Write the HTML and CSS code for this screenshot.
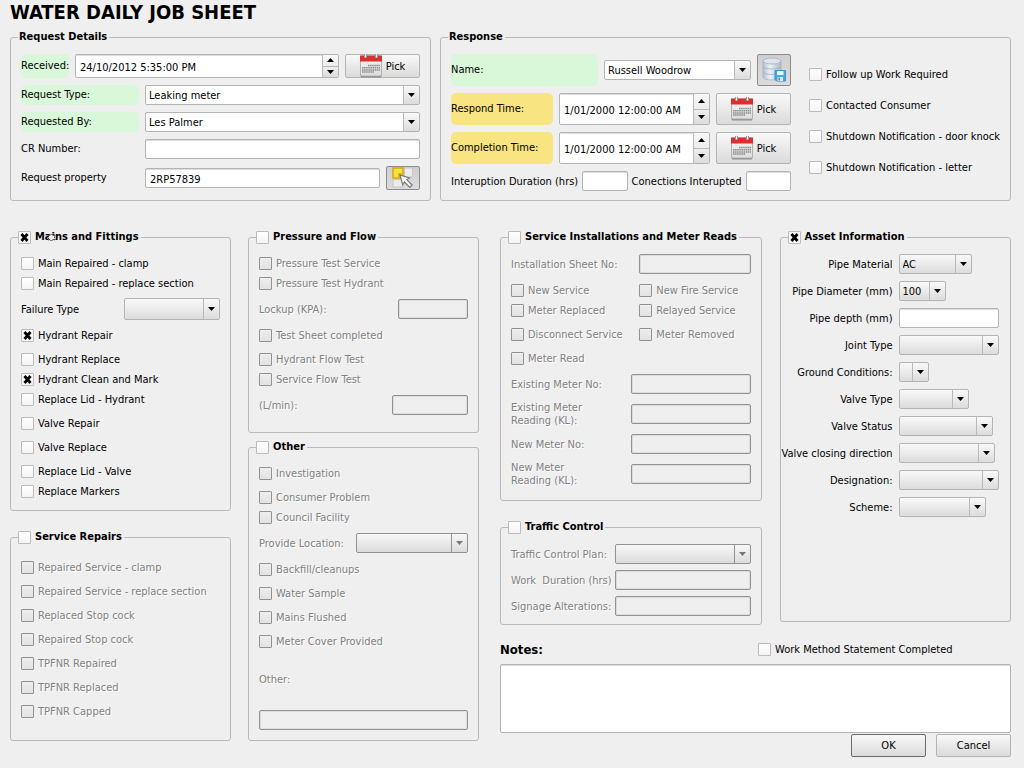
FILE: index.html
```html
<!DOCTYPE html>
<html lang="en">
<head>
<meta charset="utf-8">
<title>Water Daily Job Sheet</title>
<link rel="stylesheet" href="styles.css">
</head>
<body>
<svg class="defs" aria-hidden="true">
  <defs>
    <linearGradient id="page" x1="0" y1="0" x2="0" y2="1"><stop offset="0" stop-color="#f4f4f4"/><stop offset="1" stop-color="#dcdcdc"/></linearGradient>
    <linearGradient id="disk" x1="0" y1="0" x2="1" y2="0"><stop offset="0" stop-color="#b4c0cd"/><stop offset=".4" stop-color="#eef2f6"/><stop offset="1" stop-color="#a9b6c4"/></linearGradient>
  </defs>
  <symbol id="calendar" viewBox="0 0 22 24">
    <rect x=".5" y="3" width="21" height="20.500" rx="1.500" fill="#8e8e8e"/>
    <rect x=".5" y="2" width="21" height="20" rx="1.500" fill="url(#page)" stroke="#a9a9a9" stroke-width=".8"/>
    <rect x="0" y="1.500" width="22" height="6" fill="#d92f2f"/>
    <path d="M5.500 0v4M16.500 0v4" stroke="#8d8d8d" stroke-width="3"/>
    <path d="M5.500 0v3.500M16.500 0v3.500" stroke="#ececec" stroke-width="1.200"/>
    <path d="M8 11.500h12" stroke="#8a8a8a" stroke-width="1.500" stroke-dasharray="1.500 .6"/>
    <path d="M2 13.700h18M2 15.900h18" stroke="#8a8a8a" stroke-width="1.500" stroke-dasharray="1.500 .6"/>
    <path d="M2 18.100h12" stroke="#8a8a8a" stroke-width="1.500" stroke-dasharray="1.500 .6"/>
  </symbol>
</svg>
<form class="sheet">
  <h1 class="title">WATER DAILY JOB SHEET</h1>

  <div class="top">
    <fieldset class="group">
      <legend>Request Details</legend>
      <div class="body stack">
        <div class="row">
          <label class="tag green short" for="received">Received:</label>
          <span class="spin"><input id="received" type="text" value="24/10/2012 5:35:00 PM"><span class="steps"><button type="button" class="up" aria-label="Increase"></button><button type="button" class="down" aria-label="Decrease"></button></span></span>
          <button type="button" class="btn pick"><svg class="cal"><use href="#calendar"/></svg>Pick</button>
        </div>
        <div class="row">
          <label class="tag green" for="rtype">Request Type:</label>
          <select id="rtype" class="combo white fill"><option>Leaking meter</option></select>
        </div>
        <div class="row">
          <label class="tag green" for="rby">Requested By:</label>
          <select id="rby" class="combo white fill"><option>Les Palmer</option></select>
        </div>
        <div class="row">
          <label class="tag" for="cr">CR Number:</label>
          <input id="cr" class="text fill" type="text">
        </div>
        <div class="row">
          <label class="tag" for="prop">Request property</label>
          <input id="prop" class="text fill" type="text" value="2RP57839">
          <button type="button" class="btn tool" aria-label="Select property">
            <svg width="22" height="22" viewBox="0 0 22 22"><rect x="12.500" y="1" width="8" height="9" fill="#ececec" stroke="#c6c6c6"/><rect x="1" y="12.500" width="10" height="7.500" fill="#ececec" stroke="#c6c6c6"/><rect x="1" y="1" width="10" height="10" fill="#fbe13c" stroke="#d1ab14" stroke-width="1.500"/><rect x="6" y="6" width="5" height="5" fill="#d9b521"/><path d="M8 8l9.500 3-2.700 1.600 5.400 5.400-2.400 2.400-5.400-5.400-1.700 2.800z" fill="#f2f2f2" stroke="#777" stroke-width="1.100"/></svg>
          </button>
        </div>
      </div>
    </fieldset>

    <fieldset class="group">
      <legend>Response</legend>
      <div class="body split">
        <div class="stack">
          <div class="row tall">
            <label class="tag green wide" for="name">Name:</label>
            <select id="name" class="combo white fill"><option>Russell Woodrow</option></select>
            <button type="button" class="btn tool" aria-label="Save default name">
              <svg width="24" height="26" viewBox="0 0 24 26"><g stroke="#a5b2c0" stroke-width=".8" fill="url(#disk)"><path d="M1 15v5c0 4 18 4 18 0v-5z"/><path d="M1 9.500v5c0 4 18 4 18 0v-5z"/><path d="M1 4v5c0 4 18 4 18 0V4z"/><ellipse cx="10" cy="4" rx="9" ry="3" fill="#dce4ec"/></g><path d="M13 13.500h10.500v10.500h-9L13 22.500z" fill="#4ba9dc" stroke="#3a92c6"/><rect x="15" y="14" width="6.500" height="4" fill="#eaf6fc"/><rect x="15.500" y="20" width="5.500" height="4" fill="#d5eaf5"/><rect x="16.500" y="20.500" width="1.500" height="3" fill="#3a92c6"/></svg>
            </button>
          </div>
          <div class="row tall">
            <label class="tag amber" for="respond">Respond Time:</label>
            <span class="spin"><input id="respond" type="text" value="1/01/2000 12:00:00 AM"><span class="steps"><button type="button" class="up" aria-label="Increase"></button><button type="button" class="down" aria-label="Decrease"></button></span></span>
            <button type="button" class="btn pick"><svg class="cal"><use href="#calendar"/></svg>Pick</button>
          </div>
          <div class="row tall">
            <label class="tag amber" for="complete">Completion Time:</label>
            <span class="spin"><input id="complete" type="text" value="1/01/2000 12:00:00 AM"><span class="steps"><button type="button" class="up" aria-label="Increase"></button><button type="button" class="down" aria-label="Decrease"></button></span></span>
            <button type="button" class="btn pick"><svg class="cal"><use href="#calendar"/></svg>Pick</button>
          </div>
          <div class="row counts">
            <label for="dur">Interuption Duration (hrs)</label>
            <input id="dur" class="text fill" type="text">
            <label for="conn">Conections Interupted</label>
            <input id="conn" class="text fill" type="text">
          </div>
        </div>
        <div class="flags">
          <label class="check"><input type="checkbox">Follow up Work Required</label>
          <label class="check"><input type="checkbox">Contacted Consumer</label>
          <label class="check"><input type="checkbox">Shutdown Notification - door knock</label>
          <label class="check"><input type="checkbox">Shutdown Notification - letter</label>
        </div>
      </div>
    </fieldset>
  </div>

  <div class="main">
    <div class="left">
      <div class="column">
        <fieldset class="group">
          <legend><label class="check"><input type="checkbox" checked>Mains and Fittings</label>
            <svg class="pointer" width="9" height="9" viewBox="0 0 9 9" aria-hidden="true"><path d="M1 2l2 .5L4.500 1 6 2.500 8 2l-.5 2.500L8 7l-2-.5L4.500 8 3 6.500 1 7l.5-2.500z" fill="#efefef" stroke="#111" stroke-dasharray="1.500 1"/></svg>
          </legend>
          <div class="body">
            <label class="check"><input type="checkbox">Main Repaired - clamp</label>
            <label class="check"><input type="checkbox">Main Repaired - replace section</label>
            <div class="field"><label for="failure">Failure Type</label><select id="failure" class="combo large w96"><option></option></select></div>
            <label class="check"><input type="checkbox" checked>Hydrant Repair</label>
            <label class="check spaced"><input type="checkbox">Hydrant Replace</label>
            <label class="check"><input type="checkbox" checked>Hydrant Clean and Mark</label>
            <label class="check"><input type="checkbox">Replace Lid - Hydrant</label>
            <label class="check spaced"><input type="checkbox">Valve Repair</label>
            <label class="check spaced"><input type="checkbox">Valve Replace</label>
            <label class="check spaced"><input type="checkbox">Replace Lid - Valve</label>
            <label class="check"><input type="checkbox">Replace Markers</label>
          </div>
        </fieldset>
        <fieldset class="group grow">
          <legend><label class="check"><input type="checkbox">Service Repairs</label></legend>
          <div class="body off">
            <label class="check spaced"><input type="checkbox" disabled>Repaired Service - clamp</label>
            <label class="check spaced"><input type="checkbox" disabled>Repaired Service - replace section</label>
            <label class="check spaced"><input type="checkbox" disabled>Replaced Stop cock</label>
            <label class="check spaced"><input type="checkbox" disabled>Repaired Stop cock</label>
            <label class="check spaced"><input type="checkbox" disabled>TPFNR Repaired</label>
            <label class="check spaced"><input type="checkbox" disabled>TPFNR Replaced</label>
            <label class="check spaced"><input type="checkbox" disabled>TPFNR Capped</label>
          </div>
        </fieldset>
      </div>
      <div class="column tight">
        <fieldset class="group">
          <legend><label class="check"><input type="checkbox">Pressure and Flow</label></legend>
          <div class="body roomy off">
            <label class="check"><input type="checkbox" disabled>Pressure Test Service</label>
            <label class="check"><input type="checkbox" disabled>Pressure Test Hydrant</label>
            <div class="field"><label for="lockup">Lockup (KPA):</label><input id="lockup" class="text w70" type="text" disabled></div>
            <label class="check"><input type="checkbox" disabled>Test Sheet completed</label>
            <label class="check spaced"><input type="checkbox" disabled>Hydrant Flow Test</label>
            <label class="check"><input type="checkbox" disabled>Service Flow Test</label>
            <div class="field"><label for="lmin">(L/min):</label><input id="lmin" class="text w76" type="text" disabled></div>
          </div>
        </fieldset>
        <fieldset class="group grow">
          <legend><label class="check"><input type="checkbox">Other</label></legend>
          <div class="body off">
            <label class="check"><input type="checkbox" disabled>Investigation</label>
            <label class="check spaced"><input type="checkbox" disabled>Consumer Problem</label>
            <label class="check"><input type="checkbox" disabled>Council Facility</label>
            <div class="field"><label for="loc">Provide Location:</label><select id="loc" class="combo w112" disabled><option></option></select></div>
            <label class="check"><input type="checkbox" disabled>Backfill/cleanups</label>
            <label class="check spaced"><input type="checkbox" disabled>Water Sample</label>
            <label class="check spaced"><input type="checkbox" disabled>Mains Flushed</label>
            <label class="check spaced"><input type="checkbox" disabled>Meter Cover Provided</label>
            <div class="other"><label for="other">Other:</label><input id="other" class="text" type="text" disabled></div>
          </div>
        </fieldset>
      </div>
    </div>

    <div class="right">
      <div class="panels">
        <div class="column">
          <fieldset class="group">
            <legend><label class="check"><input type="checkbox">Service Installations and Meter Reads</label></legend>
            <div class="body roomy off">
              <div class="pair"><label for="sheet">Installation Sheet No:</label><input id="sheet" class="text" type="text" disabled></div>
              <div class="pair checks">
                <label class="check"><input type="checkbox" disabled>New Service</label>
                <label class="check"><input type="checkbox" disabled>New Fire Service</label>
                <label class="check"><input type="checkbox" disabled>Meter Replaced</label>
                <label class="check"><input type="checkbox" disabled>Relayed Service</label>
                <label class="check spaced"><input type="checkbox" disabled>Disconnect Service</label>
                <label class="check spaced"><input type="checkbox" disabled>Meter Removed</label>
                <label class="check spaced"><input type="checkbox" disabled>Meter Read</label>
              </div>
              <div class="meter"><label for="m1">Existing Meter No:</label><input id="m1" class="text" type="text" disabled></div>
              <div class="meter"><label for="m2">Existing Meter<br>Reading (KL):</label><input id="m2" class="text" type="text" disabled></div>
              <div class="meter"><label for="m3">New Meter No:</label><input id="m3" class="text" type="text" disabled></div>
              <div class="meter"><label for="m4">New Meter<br>Reading (KL):</label><input id="m4" class="text" type="text" disabled></div>
            </div>
          </fieldset>
          <fieldset class="group">
            <legend><label class="check"><input type="checkbox">Traffic Control</label></legend>
            <div class="body traffic off">
              <label for="plan">Traffic Control Plan:</label><select id="plan" class="combo" disabled><option></option></select>
              <label for="work">Work&nbsp; Duration (hrs)</label><input id="work" class="text" type="text" disabled>
              <label for="sign">Signage Alterations:</label><input id="sign" class="text" type="text" disabled>
            </div>
          </fieldset>
        </div>
        <fieldset class="group asset">
          <legend><label class="check"><input type="checkbox" checked>Asset Information</label></legend>
          <div class="body props">
            <label for="a1">Pipe Material</label><select id="a1" class="combo w73"><option>AC</option></select>
            <label for="a2">Pipe Diameter (mm)</label><select id="a2" class="combo w47"><option>100</option></select>
            <label for="a3">Pipe depth (mm)</label><input id="a3" class="text w100" type="text">
            <label for="a4">Joint Type</label><select id="a4" class="combo w100"><option></option></select>
            <label for="a5">Ground Conditions:</label><select id="a5" class="combo w30"><option></option></select>
            <label for="a6">Valve Type</label><select id="a6" class="combo w70"><option></option></select>
            <label for="a7">Valve Status</label><select id="a7" class="combo w94"><option></option></select>
            <label for="a8">Valve closing direction</label><select id="a8" class="combo w96"><option></option></select>
            <label for="a9">Designation:</label><select id="a9" class="combo w100"><option></option></select>
            <label for="a10">Scheme:</label><select id="a10" class="combo w87"><option></option></select>
          </div>
        </fieldset>
      </div>
      <div class="noteshead">
        <label class="notes" for="notes">Notes:</label>
        <label class="check"><input type="checkbox">Work Method Statement Completed</label>
      </div>
      <textarea id="notes" class="text area"></textarea>
      <div class="actions">
        <button type="button" class="btn default">OK</button>
        <button type="button" class="btn">Cancel</button>
      </div>
    </div>
  </div>
</form>
</body>
</html>
```
FILE: styles.css
```css
* { box-sizing: border-box; }

body {
  margin: 0;
  background: #efefef;
  color: #000;
  font: 11px/13px "DejaVu Sans Condensed", Tahoma, "Noto Sans", sans-serif;
}

input, select, button, textarea { font: inherit; color: inherit; margin: 0; }

.defs { position: absolute; width: 0; height: 0; }

.sheet { padding: 0 13px 11px 10px; }

.title, .notes, .group legend { font-weight: bold; }
.title { margin: 0 0 5px; font-size: 20px; line-height: 24px; }

.top { display: grid; grid-template-columns: minmax(0, 421fr) minmax(0, 571fr); gap: 9px; }
.main { display: grid; grid-template-columns: 469fr 511fr; gap: 21px; margin-top: 28px; }
.left { display: grid; grid-template-columns: 221fr 231fr; gap: 17px; margin-bottom: 16px; }
.right { display: flex; flex-direction: column; }
.panels { display: grid; grid-template-columns: 261fr 231fr; gap: 18px; }
.column { display: flex; flex-direction: column; gap: 18px; }
.tight { gap: 6px; }
.grow { flex: 1; }

/* Group boxes */
.group { margin: 0; min-width: 0; padding: 0 7px; border: 1px solid #b9b9b9; border-radius: 3px; }
.group legend { position: relative; height: 16px; padding: 0 2px 0 1px; line-height: 16px; }
.main .group legend { padding-left: 0; }
.group legend .check { height: 16px; }
.pointer { position: absolute; left: 29px; top: 4px; }
.body { padding: 8px 3px 9px; }
.roomy { padding-bottom: 11px; }
.off { color: #808080; text-shadow: 1px 1px 0 #fff; }
.asset { margin-bottom: 3px; }

.stack { display: flex; flex-direction: column; gap: 7px; min-width: 0; }
.top .body { padding-top: 9px; }
.row { display: flex; align-items: center; gap: 6px; }
.split { display: grid; grid-template-columns: minmax(0, 340fr) minmax(0, 191fr); gap: 18px; }
.flags { display: flex; flex-direction: column; gap: 11px; padding-top: 10px; }
.counts { gap: 4px; white-space: nowrap; }

.tag { flex: none; width: 118px; height: 20px; line-height: 20px; border-radius: 5px; white-space: nowrap; }
.short { width: 48px; height: 24px; line-height: 24px; }
.tall .tag { width: 102px; height: 32px; line-height: 32px; }
.tall .wide { width: 147px; }
.green { background: #d9f8d9; }
.amber { background: #f8e480; }

/* Check boxes */
.check { display: flex; align-items: center; gap: 4px; height: 20px; white-space: nowrap; }
.spaced { margin-top: 4px; }
.check input {
  appearance: none; flex: none; width: 13px; height: 13px;
  border: 1px solid #bbb; border-radius: 1px;
  background: linear-gradient(#fff, #f4f4f4);
}
.check input:checked {
  background: url("data:image/svg+xml,%3Csvg xmlns='http://www.w3.org/2000/svg' viewBox='0 0 11 11'%3E%3Cpath d='M2.500 2l6 7M8.500 2l-6 7' stroke='%23000' stroke-width='2.800'/%3E%3C/svg%3E") center / 11px 11px no-repeat, #f8f8f8;
}
.check input:disabled { border-color: #929292; background: linear-gradient(#eee, #e2e2e2); }

/* Text boxes */
.text {
  min-width: 0; height: 20px; padding: 2px 4px 0;
  border: 1px solid #b4b4b4; border-radius: 2px; background: #fff;
  box-shadow: inset 0 1px 0 #ddd;
}
.text:disabled { border-color: #929292; background: #efefef; box-shadow: inset 0 0 0 1px #ddd; }
.area { height: 69px; resize: none; }
.fill { flex: 1; }

/* Drop-downs */
.combo {
  appearance: none; min-width: 0; height: 20px; padding: 0 18px 0 3px;
  border: 1px solid #b4b4b4; border-radius: 2px;
  background:
    url("data:image/svg+xml,%3Csvg xmlns='http://www.w3.org/2000/svg' viewBox='0 0 7 4'%3E%3Cpath d='M0 0h7L3.500 4z'/%3E%3C/svg%3E") right 4px center / 7px 4px no-repeat,
    linear-gradient(#b9b9b9, #b9b9b9) right 15px top / 1px 100% no-repeat,
    linear-gradient(#f9f9f9, #dcdcdc);
}
.combo.white {
  background:
    url("data:image/svg+xml,%3Csvg xmlns='http://www.w3.org/2000/svg' viewBox='0 0 7 4'%3E%3Cpath d='M0 0h7L3.500 4z'/%3E%3C/svg%3E") right 4px center / 7px 4px no-repeat,
    linear-gradient(#b9b9b9, #b9b9b9) right 15px top / 1px 100% no-repeat,
    linear-gradient(#f9f9f9, #dcdcdc) right top / 15px 100% no-repeat,
    #fff;
}
.combo:disabled {
  opacity: 1; border-color: #929292;
  background:
    url("data:image/svg+xml,%3Csvg xmlns='http://www.w3.org/2000/svg' viewBox='0 0 7 4'%3E%3Cpath d='M0 0h7L3.500 4z' fill='%23777'/%3E%3C/svg%3E") right 4px center / 7px 4px no-repeat,
    linear-gradient(#929292, #929292) right 15px top / 1px 100% no-repeat,
    linear-gradient(#f7f7f7, #dcdcdc);
}
.large { height: 22px; }

/* Date and time spinners */
.spin { flex: 1; display: flex; min-width: 0; height: 24px; border: 1px solid #b4b4b4; border-radius: 2px; background: #fff; overflow: hidden; }
.spin input { flex: 1; min-width: 0; padding: 2px 4px 0; border: 0; background: none; box-shadow: inset 0 1px 0 #ddd; }
.steps { display: flex; flex-direction: column; width: 16px; border-left: 1px solid #b9b9b9; }
.steps button { flex: 1; padding: 0; border: 0; }
.up { background: url("data:image/svg+xml,%3Csvg xmlns='http://www.w3.org/2000/svg' viewBox='0 0 7 4'%3E%3Cpath d='M0 4h7L3.500 0z'/%3E%3C/svg%3E") center / 7px 4px no-repeat, linear-gradient(#f9f9f9, #ececec); }
.down { background: url("data:image/svg+xml,%3Csvg xmlns='http://www.w3.org/2000/svg' viewBox='0 0 7 4'%3E%3Cpath d='M0 0h7L3.500 4z'/%3E%3C/svg%3E") center / 7px 4px no-repeat, linear-gradient(#eee, #dcdcdc); }
.steps .down { border-top: 1px solid #b9b9b9; }
.tall .spin, .tall .btn { height: 32px; }

/* Buttons */
.btn {
  display: flex; align-items: center; justify-content: center; gap: 4px;
  width: 75px; height: 23px; padding: 0;
  border: 1px solid #b4b4b4; border-radius: 2px;
  background: linear-gradient(#f9f9f9, #dadada);
}
.pick { height: 24px; }
.cal { flex: none; width: 22px; height: 24px; }
.tool { width: 34px; height: 24px; border-color: #8c8c8c; background: linear-gradient(#cfcfcf, #dcdcdc); }
.default { border-color: #6c6c6c; }

/* Form rows */
.field { display: flex; align-items: center; justify-content: space-between; height: 32px; }
.other { display: flex; flex-direction: column; gap: 24px; margin-top: 22px; }
.pair { display: grid; grid-template-columns: 128fr 111fr; align-items: center; min-height: 22px; }
.checks { margin: 5px 0 1px; }
.meter { display: grid; grid-template-columns: 120fr 119fr; align-items: center; height: 30px; }
.traffic { display: grid; grid-template-columns: 104fr 136fr; align-items: center; grid-auto-rows: 22px; row-gap: 4px; padding-bottom: 7px; white-space: nowrap; }
.props { display: grid; grid-template-columns: 102px 1fr; align-items: center; grid-auto-rows: 22px; gap: 5px 6px; }
.props label { justify-self: end; white-space: nowrap; }

.w30 { width: 30px; }
.w47 { width: 47px; }
.w70 { width: 70px; }
.w73 { width: 73px; }
.w76 { width: 76px; }
.w87 { width: 87px; }
.w94 { width: 94px; }
.w96 { width: 96px; }
.w100 { width: 100px; }
.w112 { width: 112px; }

.noteshead { display: grid; grid-template-columns: 258fr 253fr; align-items: center; margin: 14px 0 5px; }
.notes { font-size: 13px; }
.actions { display: flex; justify-content: flex-end; gap: 10px; margin-top: 1px; }
```
